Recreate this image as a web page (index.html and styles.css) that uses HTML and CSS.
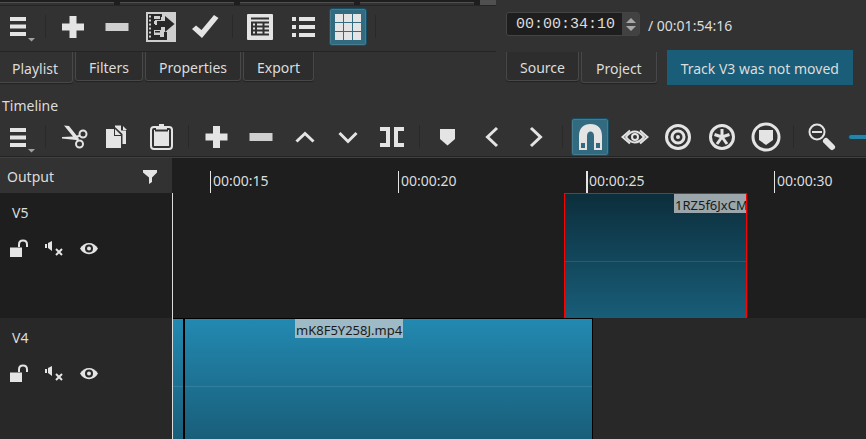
FILE: index.html
```html
<!DOCTYPE html>
<html lang="en">
<head>
<meta charset="utf-8">
<title>Video editor</title>
<link rel="stylesheet" href="styles.css">
</head>
<body>
<div class="panes">
  <section class="pane pane-list">
    <div class="strip"><span></span><span></span><span></span><span></span><i></i></div>
    <div class="toolbar" role="toolbar" aria-label="Playlist tools">
      <button class="tool menu" aria-label="Menu"><svg viewBox="0 0 37 38"><path d="M10 9h16v4H10zM10 16.500h16v4H10zM10 24h16v4H10z"/><path class="dim" d="M28 30h7l-3.500 3.500z"/></svg></button>
      <span class="sep"></span>
      <button class="tool" aria-label="Add"><svg viewBox="0 0 32 32"><path d="M12.500 5h7v7.500H27v7h-7.500V27h-7v-7.500H5v-7h7.500z"/></svg></button>
      <button class="tool" aria-label="Remove"><svg viewBox="0 0 32 32"><path class="soft" d="M4.500 12h23v8h-23z"/></svg></button>
      <button class="tool" aria-label="Update"><svg viewBox="0 0 32 32"><path class="soft" d="M1 1h30v30H1z"/><path class="cut" d="M3 3h19v3h-6v3h-6v5h6v5h-6v5h5v2h4v-5h3v8H3z"/><path class="soft" d="M4 4.500h2v2H4zM4 8.500h2v2H4zM4 12.500h2v2H4zM4 16.500h2v2H4zM4 20.500h2v2H4zM4 24.500h2v2H4zM9 5h6v3H9zM9 10h6v3H9zM9 19h7v5H9zM17 3h5v5h-5z"/><path class="cut" d="M12 10h8V5l9.500 8L20 21v-5h-8zM10 20h5v1.500h-5z"/></svg></button>
      <button class="tool" aria-label="Accept"><svg viewBox="0 0 32 32"><path d="M3 18l4-3.500 5.500 4.500L25 4l4.500 3L13 27z"/></svg></button>
      <span class="sep"></span>
      <button class="tool" aria-label="Details view"><svg viewBox="0 0 32 32"><rect x="3" y="3" width="26" height="26" rx="1"/><path class="line" d="M7 7.500h18M7 11.500h18M7 15.500h18M7 19.500h18M7 23.500h18M8 11v13M12 11v13M19.500 11v13"/></svg></button>
      <button class="tool" aria-label="List view"><svg viewBox="0 0 32 32"><path d="M4 6h4v4H4zM4 14h4v4H4zM4 22h4v4H4zM11 6h16v4H11zM11 14h16v4H11zM11 22h16v4H11z"/></svg></button>
      <button class="tool on" aria-label="Icon view" aria-pressed="true"><svg viewBox="0 0 32 32"><path d="M3 3h8v8H3zM12 3h8v8h-8zM21 3h8v8h-8zM3 12h8v8H3zM12 12h8v8h-8zM21 12h8v8h-8zM3 21h8v8H3zM12 21h8v8h-8zM21 21h8v8h-8z"/></svg></button>
      <span class="sep"></span>
    </div>
    <div class="tabs" role="tablist">
      <button class="tab current" role="tab" aria-selected="true">Playlist</button>
      <button class="tab" role="tab">Filters</button>
      <button class="tab" role="tab">Properties</button>
      <button class="tab" role="tab">Export</button>
    </div>
  </section>
  <section class="pane pane-player">
    <div class="transport">
      <div class="spin">
        <input type="text" value="00:00:34:10" aria-label="Position">
        <div class="steps">
          <button aria-label="Later"><svg viewBox="0 0 10 5"><path d="M0 5h10L5 0z"/></svg></button>
          <button aria-label="Earlier"><svg viewBox="0 0 10 5"><path d="M0 0h10L5 5z"/></svg></button>
        </div>
      </div>
      <span class="total">/ 00:01:54:16</span>
    </div>
    <div class="tabs" role="tablist">
      <button class="tab" role="tab">Source</button>
      <button class="tab current" role="tab" aria-selected="true">Project</button>
      <div class="toast" role="status">Track V3 was not moved</div>
    </div>
  </section>
</div>

<h2 class="dock-title">Timeline</h2>
<div class="toolbar timeline-tools" role="toolbar" aria-label="Timeline tools">
  <button class="tool menu" aria-label="Menu"><svg viewBox="0 0 37 38"><path d="M10 10h16v4H10zM10 17.500h16v4H10zM10 25h16v4H10z"/><path class="dim" d="M28 31h7l-3.500 3.500z"/></svg></button>
  <span class="sep"></span>
  <button class="tool" aria-label="Cut"><svg viewBox="0 0 32 32"><path d="M7 4.500l5 .5 8 10 2 3-3 1-14-1.500 0-1.500 11-.5z"/><g class="stroke"><circle cx="26" cy="13" r="3.500"/><circle cx="22.500" cy="23" r="3.500"/><path d="M18 16.500l5-2M19 17l2.500 3"/></g></svg></button>
  <button class="tool" aria-label="Copy"><svg viewBox="0 0 32 32"><path d="M5 8h8v7h7v12H5zM14 8l6 6h-6z"/><path d="M14 4.500h6v5h5V23h-3.500V13L14 6zM22 5l4 4h-4z"/></svg></button>
  <button class="tool" aria-label="Paste"><svg viewBox="0 0 32 32"><rect class="stroke" x="6" y="6" width="21" height="22" rx="3"/><path d="M9 9h15v16H9zM11 5h3V3h5v2h3v4H11z"/><path class="line" d="M10 9.500h13"/></svg></button>
  <span class="sep"></span>
  <button class="tool" aria-label="Append"><svg viewBox="0 0 32 32"><path d="M13 5h7v7.500h7.500v7H20V27h-7v-7.500H5.500v-7H13z"/></svg></button>
  <button class="tool" aria-label="Ripple delete"><svg viewBox="0 0 32 32"><path class="soft" d="M5.500 12h23v8h-23z"/></svg></button>
  <button class="tool" aria-label="Lift"><svg viewBox="0 0 32 32"><path class="stroke thick" d="M8.500 20.500l8.500-8 8.500 8"/></svg></button>
  <button class="tool" aria-label="Overwrite"><svg viewBox="0 0 32 32"><path class="stroke thick" d="M7.500 12l8.500 8.500 8.500-8.500"/></svg></button>
  <button class="tool" aria-label="Split"><svg viewBox="0 0 32 32"><path d="M4 6h10v20H4v-4h6V10H4zM18 6h10v4h-6v12h6v4H18z"/></svg></button>
  <span class="sep"></span>
  <button class="tool" aria-label="Marker"><svg viewBox="0 0 32 32"><path d="M9 8h15v10l-7.500 6.500L9 18z"/></svg></button>
  <button class="tool" aria-label="Previous"><svg viewBox="0 0 32 32"><path class="stroke thick" d="M22 7l-9.500 9 9.500 9"/></svg></button>
  <button class="tool" aria-label="Next"><svg viewBox="0 0 32 32"><path class="stroke thick" d="M12 7l9.500 9-9.500 9"/></svg></button>
  <span class="sep"></span>
  <button class="tool on" aria-label="Snap" aria-pressed="true"><svg viewBox="0 0 32 32"><path fill-rule="evenodd" d="M5 29V15C5 7 9.500 3 16.500 3S28 7 28 15v14h-8V15c0-3-1.500-4.500-3.500-4.500S13 12 13 15v14zM7 22v5h4v-5zM22 22v5h4v-5z"/></svg></button>
  <button class="tool" aria-label="Scrub while dragging"><svg viewBox="0 0 32 32"><g class="stroke"><path d="M12 9.500L4.500 16l7.500 6.500M22 9.500l7.500 6.500-7.500 6.500"/><path d="M8 16q8.500-11 18 0-9.500 11-18 0z"/><circle cx="17" cy="16" r="3"/></g></svg></button>
  <button class="tool" aria-label="Ripple"><svg viewBox="0 0 32 32"><circle class="stroke mid" cx="16" cy="16" r="11.500"/><circle class="stroke mid" cx="16" cy="16" r="6"/><circle cx="16" cy="16" r="2"/></svg></button>
  <button class="tool" aria-label="Ripple all tracks"><svg viewBox="0 0 32 32"><circle class="stroke mid" cx="16" cy="16" r="11.500"/><path class="stroke thick" d="M16 16V8M16 16l-7.500-2.500M16 16l7.500-2.500M16 16l-5 7M16 16l5 7"/></svg></button>
  <button class="tool" aria-label="Ripple markers"><svg viewBox="0 0 32 32"><circle class="stroke mid" cx="16" cy="16" r="13"/><path d="M9 9h14v10l-7 5-7-5z"/></svg></button>
  <span class="sep"></span>
  <button class="tool" aria-label="Zoom out"><svg viewBox="0 0 32 32"><circle class="stroke" cx="12" cy="11" r="7.500"/><path class="stroke" d="M7 11h10"/><path class="stroke fat" d="M21 20l6 6"/></svg></button>
  <input class="zoom" type="range" min="0" max="100" value="60" aria-label="Zoom">
</div>

<main class="timeline">
  <div class="heads">
    <div class="output"><span>Output</span><button class="bare" aria-label="Filter"><svg width="16" height="16" viewBox="0 0 16 16"><path d="M1 1h14v2.500l-5 5V13l-3 2V8.500l-6-5z"/></svg></button></div>
    <div class="head">
      <div class="name">V5</div>
      <div class="flags">
        <button class="bare" aria-label="Lock"><svg viewBox="0 0 20 20"><path d="M1 9.500h12V19H1z"/><path class="stroke" d="M10 9V6.500q0-4 4-4t4 4V9"/></svg></button>
        <button class="bare" aria-label="Mute"><svg viewBox="0 0 20 20"><path d="M1 6h2v4H1zM4 5l4-2v10l-4-3z"/><path class="stroke" d="M12 11l6 6M18 11l-6 6"/></svg></button>
        <button class="bare" aria-label="Hide"><svg viewBox="0 0 20 20"><path d="M1 10.500C5 3 15 3 19 10.500 15 18 5 18 1 10.500z"/><circle class="cut" cx="10" cy="10.500" r="4"/><circle cx="10" cy="10.500" r="2"/></svg></button>
      </div>
    </div>
    <div class="head alt">
      <div class="name">V4</div>
      <div class="flags">
        <button class="bare" aria-label="Lock"><svg viewBox="0 0 20 20"><path d="M1 9.500h12V19H1z"/><path class="stroke" d="M10 9V6.500q0-4 4-4t4 4V9"/></svg></button>
        <button class="bare" aria-label="Mute"><svg viewBox="0 0 20 20"><path d="M1 6h2v4H1zM4 5l4-2v10l-4-3z"/><path class="stroke" d="M12 11l6 6M18 11l-6 6"/></svg></button>
        <button class="bare" aria-label="Hide"><svg viewBox="0 0 20 20"><path d="M1 10.500C5 3 15 3 19 10.500 15 18 5 18 1 10.500z"/><circle class="cut" cx="10" cy="10.500" r="4"/><circle cx="10" cy="10.500" r="2"/></svg></button>
      </div>
    </div>
  </div>
  <div class="canvas">
    <div class="ruler"><span>00:00:15</span><span>00:00:20</span><span class="strong">00:00:25</span><span>00:00:30</span></div>
    <div class="lanes">
      <div class="lane"><div class="clip moving"><span class="label">1RZ5f6JxCM</span></div></div>
      <div class="lane alt"><div class="clip first"></div><div class="clip second"><span class="label">mK8F5Y258J.mp4</span></div></div>
    </div>
  </div>
</main>
</body>
</html>
```
FILE: styles.css
```css
* { box-sizing: border-box; }

body {
  margin: 0;
  height: 100vh;
  display: flex;
  flex-direction: column;
  overflow: hidden;
  background: #323232;
  color: #dcdcdc;
  font: 14px/20px "Noto Sans", "Open Sans", sans-serif;
}

button, input { font: inherit; color: inherit; margin: 0; }
button { padding: 0; border: 0; background: none; }
svg { display: block; fill: #e4e4e4; }

.dim { fill: #a0a0a0; }
.soft { fill: #cfcfcf; }
.cut { fill: #282828; }
.line { fill: none; stroke: #323232; stroke-width: 2; }
.stroke { fill: none; stroke: #e4e4e4; stroke-width: 2; }
.mid { stroke-width: 3; }
.thick { stroke-width: 3; }
.fat { stroke-width: 6; stroke-linecap: round; }

/* Upper docks */
.panes { display: flex; flex: none; height: 96px; }
.pane { display: flex; flex-direction: column; }
.pane-list { width: 496px; }
.pane-player { flex: 1; padding: 12px 0 0 10px; }

.strip { display: flex; flex: none; gap: 6px; height: 6px; background: #1e1e1e; border-bottom: 1px solid #252525; }
.strip span { width: 114px; margin-top: 2px; background: #323232; border-top: 1px solid #505050; }
.strip i { width: 16px; background: #505050; }

.toolbar { display: flex; align-items: center; gap: 6px; height: 46px; padding-bottom: 4px; border-bottom: 1px solid #242424; }
.tool { flex: none; display: grid; place-items: center; width: 38px; height: 38px; border-radius: 3px; }
.tool svg { width: 32px; height: 32px; }
.tool.menu { width: 37px; }
.tool.menu svg { width: 37px; height: 38px; }
.tool.on { background: #326a80; border: 1px solid #164f65; box-shadow: inset 0 0 0 1px #477b8f; }
.sep { flex: none; width: 5px; height: 23px; background: linear-gradient(#292929, #292929) center / 1px 100% no-repeat; }

.tabs { display: flex; align-items: flex-start; gap: 2px; }
.tab {
  height: 29px;
  padding: 3px 13px 0;
  background: #2d2d2d;
  border: 1px solid #484848;
  border-top: 0;
  border-radius: 0 0 3px 3px;
  box-shadow: 0 1px 1px #222;
}
.tab.current { height: 31px; padding: 3px 14px 0; background: #323232; }
.pane-list .tab.current { padding-left: 12px; border-left: 0; border-radius: 0 0 3px 0; }

.transport { display: flex; align-items: center; gap: 8px; height: 24px; margin-bottom: 16px; }
.spin { display: flex; width: 134px; height: 24px; border: 1px solid #444; border-radius: 3px; background: #1e1e1e; }
.spin input { width: 115px; padding: 0 0 0 9px; border: 0; background: none; font: 15px "Liberation Mono", monospace; outline: 0; }
.steps { flex: 1; display: flex; flex-direction: column; justify-content: center; gap: 3px; background: #424242; }
.steps button { display: grid; place-items: center; }
.steps svg { width: 10px; height: 5px; fill: #a8a8a8; }
.total { padding-top: 4px; }
.toast { margin: -2px 0 0 8px; padding: 9px 14px 6px; background: #1a5d78; white-space: nowrap; }

/* Timeline dock */
.dock-title { flex: none; margin: 0 0 1px 2px; font: inherit; height: 20px; }
.timeline-tools { height: 40px; flex: none; padding-bottom: 0; overflow: hidden; }
.timeline-tools + .timeline { border-top: 1px solid #404040; }
.zoom { appearance: none; flex: none; width: 160px; height: 6px; margin-left: 2px; border: 1px solid #1b3a47; border-radius: 3px; background: #2584a8; }

.timeline { flex: 1; display: flex; min-height: 0; }
.heads { flex: none; width: 172px; display: flex; flex-direction: column; background: #282828; overflow: hidden; }
.output { flex: none; display: flex; align-items: center; justify-content: space-between; height: 35px; padding: 2px 14px 0 7px; background: #323232; }
.bare { display: block; }
.head { flex: none; height: 125px; padding: 10px 9px; background: #1e1e1e; }
.head.alt { background: #282828; }
.name { padding-left: 3px; }
.flags { display: flex; gap: 15px; margin-top: 15px; }
.flags svg { width: 20px; height: 20px; }

.canvas { flex: 1; min-width: 0; display: flex; flex-direction: column; background: #1e1e1e; overflow: hidden; }
.ruler { flex: none; display: flex; height: 35px; padding: 13px 0 0 38px; }
.ruler span { flex: none; width: 188px; padding-left: 2px; border-left: 1px solid #e4e4e4; }
.ruler .strong { border-left-width: 2px; padding-left: 1px; }
.lanes { flex: 1; border-left: 1px solid #dcdcdc; }
.lane { position: relative; height: 125px; }
.lane.alt { background: #282828; }

/* Clips sit at their time offset on the lane */
.clip {
  position: absolute;
  top: 0;
  height: 125px;
  overflow: hidden;
  border: 1px solid #000;
  background: linear-gradient(#ffffff1a, #ffffff1a) 0 67px / 100% 1px no-repeat, linear-gradient(#2389b1, #185d78);
}
.moving {
  left: 391px;
  width: 183px;
  border-color: #f00;
  background: linear-gradient(#ffffff1a, #ffffff1a) 0 67px / 100% 1px no-repeat, linear-gradient(#0c2e3b, #185d78);
}
.first { left: 0; width: 11px; border-left: 0; }
.second { left: 11px; width: 409px; }
.label { position: absolute; top: 0; left: 110px; padding: 0 1px; height: 19px; font-size: 13px; line-height: 22px; color: #1a1a1a; background: #9dbac6; white-space: nowrap; }
.moving .label { left: 109px; background: #9aa6aa; }
```
